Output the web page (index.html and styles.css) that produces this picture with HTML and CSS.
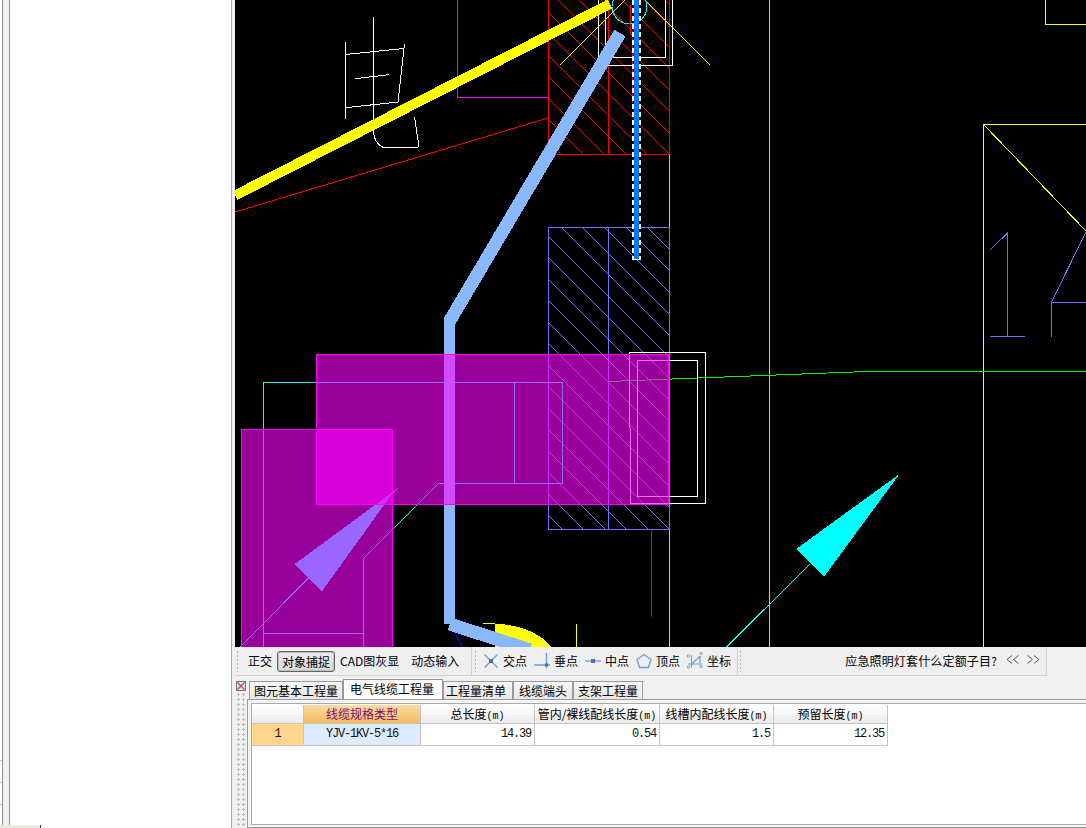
FILE: index.html
```html
<!DOCTYPE html>
<html lang="zh-CN">
<head>
<meta charset="utf-8">
<title>电气线缆工程量</title>
<link rel="stylesheet" href="styles.css">
</head>
<body>
<div class="app">
  <aside class="side">
    <div class="rail-outer">
      <div class="rail-long"></div>
      <div class="rail-row"></div>
      <div class="rail-row"></div>
      <div class="rail-end"></div>
    </div>
    <div class="rail-mid"></div>
    <div class="side-main"></div>
    <div class="side-edge"></div>
    <div class="side-foot"></div>
  </aside>
  <main class="main">
    <svg class="cad" width="851" height="647" viewBox="235 0 851 647" aria-label="CAD">
      <defs>
        <clipPath id="clip-red"><rect x="548" y="0" width="122" height="155"/></clipPath>
        <clipPath id="clip-blue"><rect x="548" y="227" width="122" height="302"/></clipPath>
      </defs>
      <!-- underlying linework -->
      <path class="pink" d="M457.5 0V97.5H548"/>
      <g clip-path="url(#clip-red)">
        <path class="red" d="M665.5 .5l160 160M644.5 .5l160 160M622.5 .5l160 160M601.5 .5l160 160M579.5 .5l160 160M558.5 .5l160 160M536.5 .5l160 160M515.5 .5l160 160M493.5 .5l160 160M472.5 .5l160 160M450.5 .5l160 160M429.5 .5l160 160M407.5 .5l160 160"/>
      </g>
      <path class="red" d="M548.5 0V154.5H669.5V0M608.5 0V154.5M630.5 5V34H632V103M235 212L548 118"/>
      <path class="gray" d="M669.5 155V647M769.5 0V647"/>
      <g clip-path="url(#clip-blue)">
        <path class="blue" d="M669.5 227.5l303 303M647.5 227.5l303 303M626.5 227.5l303 303M604.5 227.5l303 303M582.5 227.5l303 303M561.5 227.5l303 303M539.5 227.5l303 303M518.5 227.5l303 303M496.5 227.5l303 303M475.5 227.5l303 303M453.5 227.5l303 303M432.5 227.5l303 303M410.5 227.5l303 303M389.5 227.5l303 303M367.5 227.5l303 303M346.5 227.5l303 303M324.5 227.5l303 303M303.5 227.5l303 303M281.5 227.5l303 303M260.5 227.5l303 303"/>
      </g>
      <path class="blue" d="M548.5 227.5H669.5V529H548.5ZM608.5 227.5V529"/>
      <path class="white" d="M345.5 42V119M373.5 17V132Q374 143 384 148L419 147L414.5 117M345.5 54.5L403.5 48.5M404.5 44L398 102M355 78.7L389 74.7M345.5 107.7L398.5 102"/>
      <path class="white" d="M598 0V65.5H672.5V0M605 0V57.5H665.5V0"/>
      <path class="yellow" d="M560 65L625 0M645 0L710 65M983.5 647V124.5H1086M1045.5 0V24.5H1086M984 125L1086 231M576.5 624V647M483 623.5H495"/>
      <circle class="cyan" cx="629.5" cy="6.5" r="17.5"/>
      <path class="blue" d="M990 250L1007.5 233V336.5M990 336.5H1025M1086 232L1051.5 302V337M1051.5 302.5H1086"/>
      <path class="green" d="M608 381.5L866.5 371.5H1086"/>
      <path class="white" d="M629.5 428V352.7H705.5V503.5H630.5V428M637.5 360.5H697.5V496H637.5Z"/>
      <path class="cyan" d="M263.5 647V382.5H562.5V483.5H438.5L363.5 558.5V647M514.5 382.5V483.5M263.5 633.5H363.5M240 647L397.5 488.5M726.5 647L810 564"/>
      <path class="fill-cyan" d="M394.3 490.7L294.3 564.3L321.7 591.7Z"/>
      <path class="fill-cyan" d="M899.5 474L796.3 549L824 576.7Z"/>
      <path class="red" d="M651.5 530V617"/>
      <path class="fill-yellow" d="M495 624C520 624 540 633 552 647H495Z"/>
      <path class="dark-blue" d="M454.3 631.7L462.3 647"/>
      <!-- thick wires -->
      <path class="wire-yellow" d="M235 195.5L610 4"/>
      <path class="wire-light wire-light-slant" d="M620 33L449.7 321"/>
      <path class="wire-light" d="M449.7 318V624"/>
      <path class="wire-light wire-light-slant" d="M449.7 624L530 650"/>
      <path class="wire-dash" d="M636 0V260"/>
      <path class="wire-blue" d="M636 0V259"/>
      <!-- translucent region fills -->
      <rect class="zone" x="316.5" y="354" width="352" height="150.5"/>
      <rect class="zone" x="241.5" y="429.5" width="151" height="230"/>
    </svg>
    <div class="toolbar">
      <div class="tool-group tool-modes">
        <span class="grip"></span>
        <span class="mode">正交</span>
        <span class="mode-on">对象捕捉</span>
        <span class="mode">CAD图灰显</span>
        <span class="mode mode-last">动态输入</span>
      </div>
      <div class="tool-group tool-snaps">
        <span class="grip"></span>
        <span class="snap snap-first">
          <svg width="16" height="16" viewBox="0 0 16 16"><path class="ico" d="M1.5 1.5L14.5 14.5M14.5 1.5L1.5 14.5"/><rect class="ico-dot" x="6" y="6" width="4" height="4"/></svg>交点</span>
        <span class="snap">
          <svg width="16" height="16" viewBox="0 0 16 16"><path class="ico" d="M0 12H16M12.5 0V15"/><rect class="ico-dot" x="11" y="10.5" width="3" height="3"/></svg>垂点</span>
        <span class="snap">
          <svg width="16" height="16" viewBox="0 0 16 16"><path class="ico" d="M0 8H16"/><rect class="ico-dot" x="6" y="6" width="4" height="4"/></svg>中点</span>
        <span class="snap">
          <svg width="16" height="16" viewBox="0 0 16 16"><path class="ico" d="M8 1.5L15 6.5L12.5 14.5H3.5L1 6.5Z"/></svg>顶点</span>
        <span class="snap">
          <svg width="16" height="18" viewBox="0 0 16 18"><path class="ico ico-thin" d="M4.5 3V15.5M1 12H15M5 12L13 4M13 4V11"/><g class="ico-ring"><circle cx="1.5" cy="4" r="1.2"/><circle cx="14" cy="1.5" r="1.2"/><circle cx="1.5" cy="15" r="1.2"/><circle cx="14" cy="14.5" r="1.2"/></g></svg>坐标</span>
      </div>
      <div class="tool-group tool-tips">
        <span class="grip"></span>
        <span class="tip">应急照明灯套什么定额子目?</span>
        <svg class="chev" width="13" height="10" viewBox="0 0 13 10"><path class="chev-line" d="M6 .5L1 4.5L6 8.5M12.5 .5L7.5 4.5L12.5 8.5"/></svg>
        <svg class="chev" width="13" height="10" viewBox="0 0 13 10"><path class="chev-line" d="M.5 .5L5.5 4.5L.5 8.5M7 .5L12 4.5L7 8.5"/></svg>
      </div>
    </div>
    <section class="dock">
      <div class="dock-rail">
        <svg class="dock-close" width="10" height="10" viewBox="0 0 10 10"><rect class="close-box" x=".5" y=".5" width="9" height="9"/><path class="close-x" d="M1.5 1.5L8.5 8.5M8.5 1.5L1.5 8.5"/></svg>
        <div class="dock-grip"></div>
      </div>
      <div class="dock-body">
        <div class="tabs">
          <span class="tab tab-w94">图元基本工程量</span>
          <span class="tab tab-on tab-w100">电气线缆工程量</span>
          <span class="tab tab-w70 tab-shift">工程量清单</span>
          <span class="tab tab-w60">线缆端头</span>
          <span class="tab tab-w70">支架工程量</span>
        </div>
        <div class="frame">
          <div class="frame-inner">
            <div class="grid">
              <div class="th"></div>
              <div class="th th-on">线缆规格类型</div>
              <div class="th">总长度<span class="unit">(m)</span></div>
              <div class="th">管内/裸线配线长度<span class="unit">(m)</span></div>
              <div class="th">线槽内配线长度<span class="unit">(m)</span></div>
              <div class="th">预留长度<span class="unit">(m)</span></div>
              <div class="td td-head">1</div>
              <div class="td td-on">YJV-1KV-5*16</div>
              <div class="td td-num">14.39</div>
              <div class="td td-num">0.54</div>
              <div class="td td-num">1.5</div>
              <div class="td td-num">12.35</div>
            </div>
          </div>
        </div>
      </div>
    </section>
  </main>
</div>
</body>
</html>
```
FILE: styles.css
```css
* { box-sizing: border-box; }
html, body { margin: 0; padding: 0; }
body {
  width: 1086px;
  height: 828px;
  overflow: hidden;
  background: #f0f0f0;
  color: #000;
  font: 12px/16px "Noto Sans CJK SC", "Liberation Sans", sans-serif;
}
.app { display: flex; width: 1086px; height: 828px; }

/* left side panel */
.side { position: relative; display: flex; width: 235px; height: 828px; flex: none; }
.rail-outer { display: flex; flex-direction: column; width: 3px; background: #fff; border-right: 1px solid #8b9099; }
.rail-long { height: 761px; border-bottom: 1px solid #cfcfcf; }
.rail-row { height: 22px; border-bottom: 1px solid #cfcfcf; }
.rail-end { flex: 1; }
.rail-mid { width: 7px; background: #f2f2f2; border-right: 1px solid #8b9099; }
.side-main { width: 222px; background: #fff; border-right: 1px solid #a5a8ae; }
.side-edge { flex: 1; background: #efefef; }
.side-foot { position: absolute; left: 0; bottom: 0; width: 41px; height: 3px; background: #e9e9e2; border-right: 1px solid #333; }

/* main column */
.main { display: flex; flex-direction: column; width: 851px; }
.cad { display: block; flex: none; background: #000; shape-rendering: crispEdges; }
.cad path, .cad circle { fill: none; }
.cad .red { stroke: #f00; }
.cad .blue { stroke: #7070ff; }
.cad .pink { stroke: #f0f; }
.cad .gray { stroke: #c0c0c0; }
.cad .white { stroke: #fff; }
.cad .yellow { stroke: #ff0; }
.cad .cyan { stroke: #0ff; }
.cad .green { stroke: #0f0; }
.cad .dark-blue { stroke: #00f; }
.cad .fill-cyan { fill: #0ff; }
.cad .fill-yellow { fill: #ff0; }
.cad .wire-yellow { stroke: #ff0; stroke-width: 10; }
.cad .wire-light { stroke: #8ab8ff; stroke-width: 11; }
.cad .wire-light-slant { stroke-width: 13; }
.cad .wire-dash { stroke: #fff; stroke-width: 9; stroke-dasharray: 5 3; }
.cad .wire-blue { stroke: #0078ff; stroke-width: 5; }
.cad .zone { fill: #f0f; fill-opacity: .6; stroke: #f0f; }

/* toolbar */
.toolbar { display: flex; flex: none; width: 812px; height: 29px; background: #efefef; border-bottom: 1px solid #d2d2d2; }
.tool-group { display: flex; align-items: center; border-right: 1px solid #d2d2d2; }
.tool-modes { width: 237px; }
.tool-snaps { width: 266px; }
.tool-tips { width: 309px; padding-right: 6px; }
.grip {
  width: 3px;
  height: 22px;
  background-image: radial-gradient(circle at center, #b5b5b5 1px, transparent 1.1px);
  background-size: 3px 4px;
}
.tool-modes .grip { margin-left: 1px; margin-right: 9px; }
.tool-snaps .grip { margin-left: 2px; margin-right: 6px; }
.tool-tips .grip { margin-left: 1px; margin-right: auto; }
.mode { flex: none; }
.mode-on {
  flex: none;
  width: 58px;
  height: 21px;
  margin: 0 5px;
  text-align: center;
  line-height: 19px;
  border: 1px solid #666;
  border-radius: 3px;
  background: linear-gradient(#ececec, #d8d8d8);
  box-shadow: inset 0 0 0 1px #bdbdbd;
}
.mode-last { margin-left: 12px; }
.snap { display: flex; align-items: center; gap: 4px; flex: none; margin-left: 7px; }
.snap-first { margin-left: 0; }
.ico { fill: none; stroke: #6f9fdc; stroke-width: 1.4; }
.ico-thin { stroke-width: 1.2; }
.ico-dot { fill: #4a70b4; }
.ico-ring circle { fill: none; stroke: #888; stroke-width: .8; }
.tip { margin-right: 9px; letter-spacing: .16px; }
.chev { flex: none; margin-bottom: 3px; }
.chev + .chev { margin-left: 8px; }
.chev-line { fill: none; stroke: #555; stroke-width: 1; }

/* bottom dock */
.dock { display: flex; flex: 1; min-height: 0; background: #f0f0f0; }
.dock-rail { display: flex; flex-direction: column; width: 12px; padding: 5px 0 0 1px; flex: none; }
.dock-close { display: block; flex: none; }
.close-box { fill: #e4e4e4; stroke: #777; }
.close-x { fill: none; stroke: #b05050; stroke-width: 1.3; }
.dock-grip {
  flex: 1;
  width: 10px;
  margin-top: 1px;
  background-image: radial-gradient(circle at center, #bdbdbd 1px, transparent 1.1px);
  background-size: 5px 5px;
}
.dock-body { display: flex; flex-direction: column; flex: 1; min-width: 0; }
.tabs { display: flex; align-items: flex-end; flex: none; height: 23px; padding-left: 2px; }
.tab {
  height: 18px;
  line-height: 17px;
  text-align: center;
  flex: none;
  border: 1px solid #9a9a9a;
  border-bottom: 0;
  background: linear-gradient(#f7f7f7, #e7e7e7);
}
.tab-on { height: 20px; line-height: 18px; padding-right: 2px; background: #fff; border-color: #999; }
.tab-shift { padding-right: 4px; }
.tab-w94 { width: 94px; }
.tab-w100 { width: 100px; }
.tab-w70 { width: 70px; }
.tab-w60 { width: 60px; }
.frame {
  flex: 1;
  padding: 3px 0 2px 3px;
  border: 1px solid #9a9a9a;
  border-right: 0;
  background: #f4f4f4;
  min-height: 0;
}
.frame-inner {
  height: 100%;
  padding-top: 1px;
  background: #fff;
  border: 1px solid #a9a9a9;
  border-right: 0;
}
.grid {
  display: grid;
  grid-template-columns: 52px 117px 114px 125px 114px 114px;
  grid-template-rows: 19px 22px;
  width: 636px;
}
.th, .td { border-right: 1px solid #c4c4c4; border-bottom: 1px solid #c4c4c4; }
.th { text-align: center; line-height: 18px; background: linear-gradient(#fff, #ececec); white-space: nowrap; }
.th-on { background: linear-gradient(#fcdca4, #f4bd5c); color: #7a0a7a; }
.unit { font: 10px/18px "Liberation Mono", monospace; }
.td {
  line-height: 21px;
  font-family: "Liberation Mono", monospace;
  font-size: 12px;
  letter-spacing: -1.2px;
  color: #111;
}
.td-head { text-align: center; background: #ffd68c; }
.td-on { text-align: center; background: #dcecfd; }
.td-num { text-align: right; padding-right: 3px; }
```
